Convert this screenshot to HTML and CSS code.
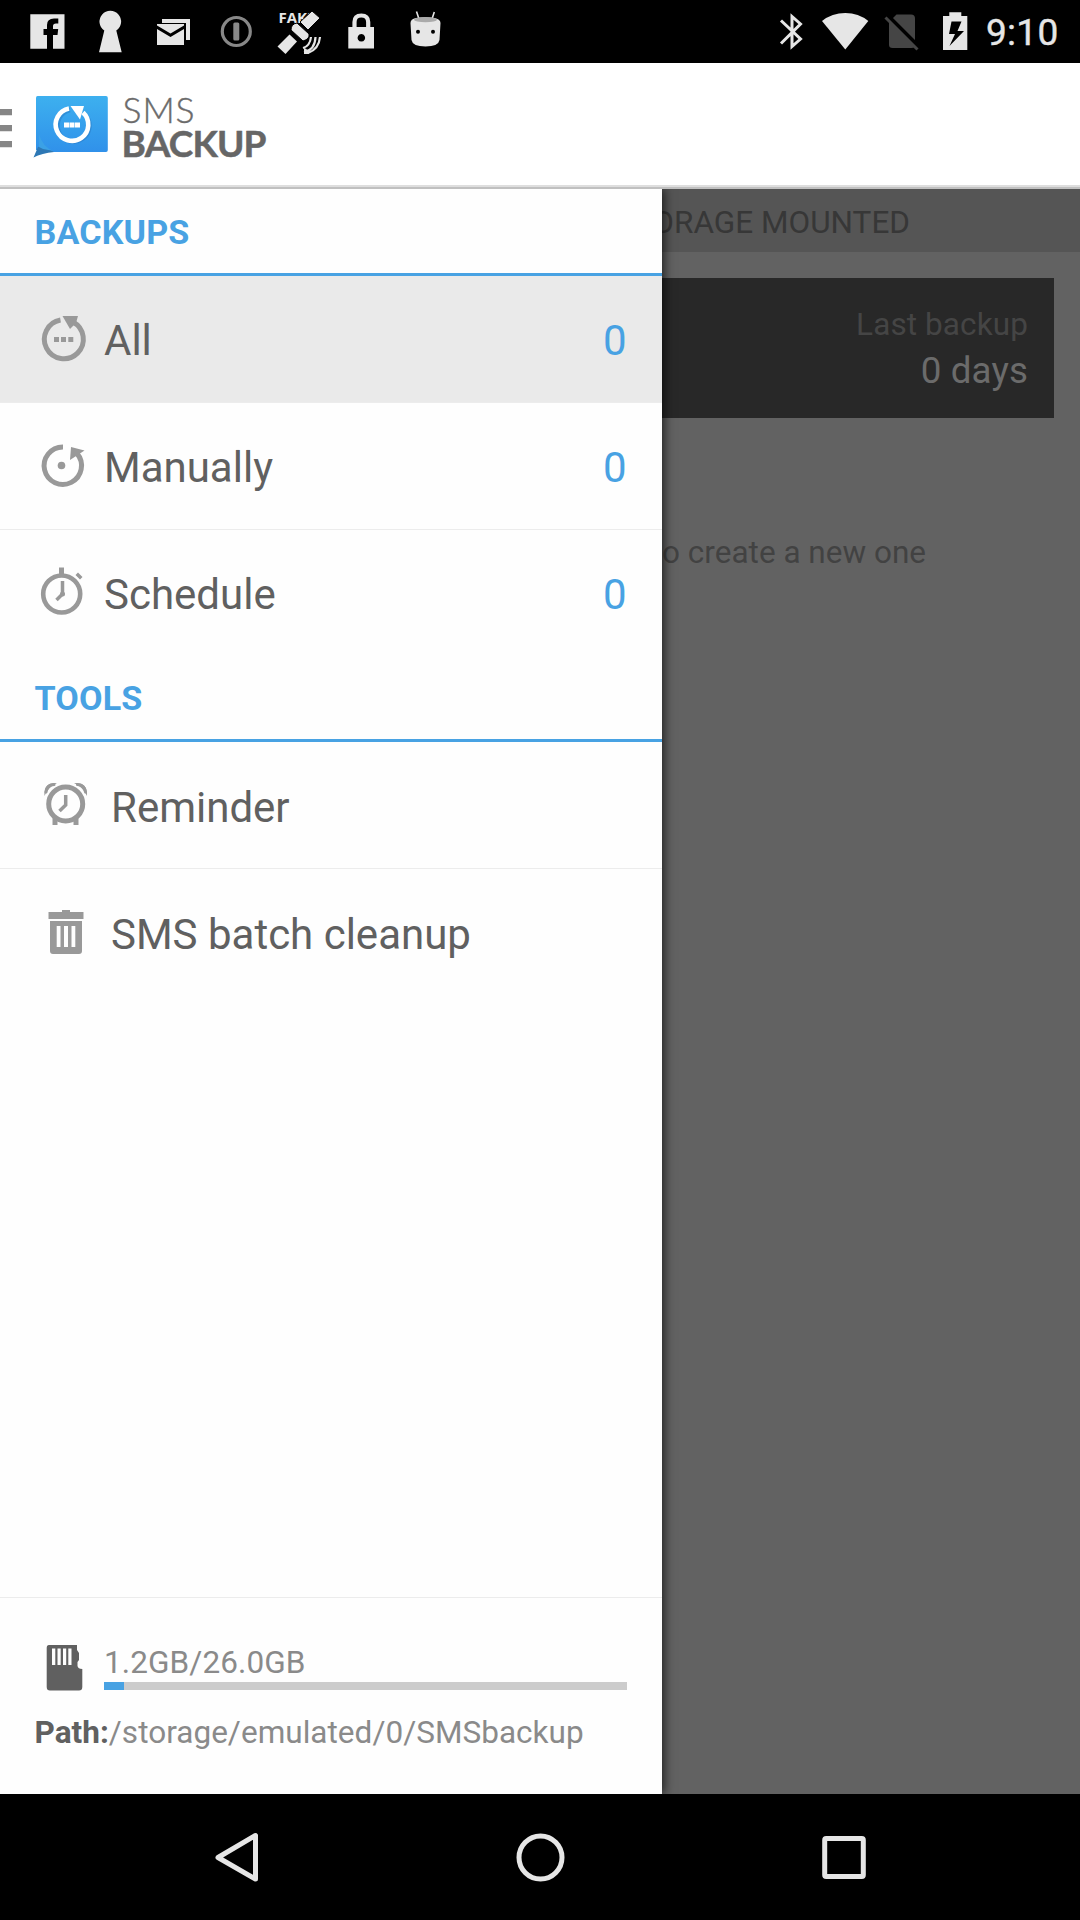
FILE: index.html
```html
<!DOCTYPE html>
<html lang="en">
<head>
<meta charset="utf-8">
<title>SMS Backup</title>
<link rel="stylesheet" href="styles.css">
</head>
<body>
<div class="screen">
  <header class="status">
    <div class="notifications">
      <svg class="cell" viewBox="16 0 63 63"><path fill="#e6e6e6" fill-rule="evenodd" d="M30.300 14.300H64.500V48.700H53V35H57.500L58.200 29H53V26Q53 23.500 56 23.500H58.300V18.500H54Q47 18.500 47 25V29H43.500V35H47V48.700H30.300Z"/></svg>
      <svg class="cell" viewBox="79 0 63 63"><path fill="#e6e6e6" d="M99 52.300L104.300 30.500A10.800 10.800 0 1 1 116.300 30.500L121.700 52.300Z"/></svg>
      <svg class="cell" viewBox="142 0 63 63"><path fill="#e6e6e6" d="M162 19H190V40H186V23H162ZM157 24H184V25.500L170.500 33.500L157 25.500ZM157 29L170.500 37L184 29V45H157Z"/></svg>
      <svg class="cell" viewBox="205 0 63 63"><circle cx="236.300" cy="31.500" r="14" fill="none" stroke="#888" stroke-width="3.200"/><rect x="233.300" y="22.500" width="6" height="18" rx="1.500" fill="#888"/></svg>
      <svg class="cell" viewBox="268 0 63 63"><text x="278.500" y="23" class="fake">FAKE</text><g fill="#e6e6e6"><path stroke="#000" stroke-width="1" d="M312 11L320 18L308 30L300 22Z"/><path stroke="#000" stroke-width="1" d="M297 23L309 34Q310 39 303 41L291 30Q291 24 297 23Z"/><path d="M289.500 34.500L297 41.500L285.500 54L277.500 46.500Z"/><path d="M304 48A7 7 0 0 1 309 54H304Z"/></g><path fill="none" stroke="#e6e6e6" stroke-width="2.200" d="M303 48Q310 46 311 37M304 52Q315 50 315.500 37M308 53Q319 49 320 37"/></svg>
      <svg class="cell" viewBox="331 0 63 63"><path fill="none" stroke="#e6e6e6" stroke-width="4.200" d="M354.500 29V22Q354.500 15.500 361.300 15.500T368.200 22V29"/><path fill="#e6e6e6" fill-rule="evenodd" d="M348.300 27H374V48.500H348.300ZM361.300 34A3.800 3.800 0 1 0 361.400 34Z"/></svg>
      <svg class="cell" viewBox="394 0 63 63"><path d="M416.500 11.500L419 19M434.300 12L432 19" stroke="#e6e6e6" stroke-width="1.600"/><path fill="#e6e6e6" d="M410.500 23Q410.500 19 416 18Q425 16.500 434 18Q440.500 19 440.500 23L439.500 40Q438.500 46.500 425.500 46.500T411.500 40Z"/><ellipse cx="425.500" cy="19.700" rx="11.500" ry="2.600" fill="#aaa"/><circle cx="418" cy="31.700" r="2"/><circle cx="433" cy="31.700" r="2"/></svg>
    </div>
    <div class="system">
      <svg class="bluetooth" viewBox="776 0 32 63"><path fill="none" stroke="#e6e6e6" stroke-width="3" d="M781 20.500L800.500 39L792 46.500V16.500L800.500 24L781 43.500"/></svg>
      <svg class="wifi" viewBox="820 0 50 63"><path fill="#e6e6e6" d="M845.300 49.500L822 21Q832 13 845.300 13T868.300 21Z"/></svg>
      <svg class="sim" viewBox="882 0 40 63"><path fill="#454545" d="M896.500 14.500H911Q915 14.500 915 18.500V45Q915 48 911.500 48H892.500Q889 48 889 45V22Z"/><path stroke="#000" stroke-width="4" d="M888 16L919 47"/><path stroke="#454545" stroke-width="3" d="M885.500 17.500L917.500 49.500"/></svg>
      <svg class="battery" viewBox="940 0 30 63"><path fill="#e6e6e6" fill-rule="evenodd" d="M949.300 12.300H961.300V16H967.300V50H943V16H949.300ZM951.500 21.500L949 34H955L949.500 46L964 31H957.500L961.500 21.500Z"/></svg>
      <span class="clock">9:10</span>
    </div>
  </header>

  <div class="appbar">
    <svg class="brand" viewBox="0 63 300 122">
      <defs>
        <linearGradient id="bubble" x1="0" y1="0" x2="0" y2="1"><stop offset="0" stop-color="#3db0ef"/><stop offset="1" stop-color="#3091ea"/></linearGradient>
      </defs>
      <path fill="#868686" d="M0 109H12V115.200H0ZM0 125H12V131.200H0ZM0 141H12V147.200H0Z"/>
      <path fill="url(#bubble)" d="M37.500 96H106Q107.800 96 107.800 98V150Q107.800 152 106 152H53L36 150V98Q36 96 37.500 96Z"/>
      <path fill="#2d78b5" d="M33.500 157.500L38 147L43 146L54 152Q42 153 33.500 157.500Z"/>
      <path fill="#3ba1e6" d="M39 134Q43 148 54 151L43 149L39 147Z"/>
      <g fill="none" stroke="#2670b8" stroke-opacity=".4" stroke-width="4.500"><path d="M70 110A16 16 0 1 0 84.500 114"/></g>
      <path fill="none" stroke="#fff" stroke-width="4.600" d="M69 108.500A16.300 16.300 0 1 0 83 112.500"/>
      <path fill="#fff" d="M70.500 106H84L80 119.500Z"/>
      <path fill="#fff" d="M64 122.500H69V127.500H64ZM69.500 122.500H74.500V127.500H69.500ZM75 122.500H80V127.500H75Z"/>
      <text class="brand-light" x="122.500" y="123" textLength="72">SMS</text>
      <text class="brand-bold" x="121.500" y="157" textLength="145">BACKUP</text>
    </svg>
  </div>

  <div class="body">
    <main class="content">
      <div class="mounted">STORAGE MOUNTED</div>
      <section class="card"><span class="card-label">Last backup</span><span class="card-value">0 days</span></section>
      <p class="hint">to create a new one</p>
    </main>

    <nav class="drawer">
      <h2 class="heading">BACKUPS</h2>
      <a class="row selected">
        <svg class="icon" viewBox="36 306 54 64"><path fill="none" stroke="#999" stroke-width="5" d="M60.500 320A19.500 19.500 0 1 0 73 322"/><path fill="#999" d="M62.500 316H78L76 323L70 329Z"/><path fill="#999" d="M54 337H59V342H54ZM61 337H66V342H61ZM68.300 337H73.300V342H68.300Z"/></svg>
        <span class="label">All</span><span class="count">0</span>
      </a>
      <a class="row">
        <svg class="icon" viewBox="36 433 54 64"><path fill="none" stroke="#999" stroke-width="5" d="M63 447A18.700 18.700 0 1 0 77 453.500"/><path fill="#999" d="M71 447L84.500 450.500L70 460Z"/><circle cx="61.500" cy="465.500" r="3.800" fill="#999"/></svg>
        <span class="label">Manually</span><span class="count">0</span>
      </a>
      <a class="row last">
        <svg class="icon" viewBox="36 560 54 64"><circle cx="61.700" cy="594" r="18.500" fill="none" stroke="#999" stroke-width="4.600"/><path fill="#999" d="M59 567.500H64V575H59ZM78 572.500L82.500 577L80 579.500L75.500 575Z"/><path fill="none" stroke="#999" stroke-width="3.500" d="M62.500 581V594L56.500 600"/><circle cx="62.500" cy="594" r="2.500" fill="#999"/></svg>
        <span class="label">Schedule</span><span class="count">0</span>
      </a>
      <h2 class="heading tools">TOOLS</h2>
      <a class="row tool">
        <svg class="icon" viewBox="36 773 54 64"><circle cx="65.700" cy="805" r="17" fill="none" stroke="#999" stroke-width="5"/><path fill="#999" d="M44.500 797Q43 783 57 784Q48 788 44.500 797ZM87 797Q88 783 74 784Q83 788 87 797Z"/><path fill="none" stroke="#999" stroke-width="3" stroke-linecap="round" d="M46 793Q47 786 54 785.500M85.500 793Q84.500 786 77.500 785.500"/><path fill="none" stroke="#999" stroke-width="5" d="M55 818V826M76 818V826"/><path fill="none" stroke="#999" stroke-width="3.500" d="M65.700 796V806L59.500 812"/></svg>
        <span class="label">Reminder</span>
      </a>
      <a class="row tool last">
        <svg class="icon" viewBox="36 900 54 64"><path fill="#999" fill-rule="evenodd" d="M48.500 913H62V911H70V913H83.500V920H48.500ZM50 922H82V952Q82 955 79 955H53Q50 955 50 952ZM56.700 927V948H60.500V927ZM64 927V948H68V927ZM71.500 927V948H75.300V927Z"/></svg>
        <span class="label">SMS batch cleanup</span>
      </a>
      <footer class="storage">
        <div class="usage">
          <svg class="icon" viewBox="36 1638 54 60"><path fill="#606060" fill-rule="evenodd" d="M49 1645H77V1650L79 1653V1660L77.500 1662V1666Q78 1669 82.300 1669V1687Q82.300 1690.500 79 1690.500H50Q46.700 1690.500 46.700 1687V1648Q46.700 1645 49 1645ZM52 1648.500V1665H55.300V1648.500ZM57.500 1648.500V1665H60.700V1648.500ZM63 1648.500V1665H66.200V1648.500ZM68.300 1648.500V1665H71.500V1648.500Z"/></svg>
          <div class="meter"><span class="amount">1.2GB/26.0GB</span><div class="track"><div class="fill"></div></div></div>
        </div>
        <p class="path"><b>Path:</b>/storage/emulated/0/SMSbackup</p>
      </footer>
    </nav>
  </div>

  <footer class="navbar">
    <svg class="navicon" viewBox="210 1831 54 54"><path fill="none" stroke="#e6e6e6" stroke-width="5" stroke-linejoin="round" d="M255.500 1835.500V1879L218 1857.500Z"/></svg>
    <svg class="navicon" viewBox="513.500 1831 54 54"><circle cx="540" cy="1857.500" r="21.500" fill="none" stroke="#e6e6e6" stroke-width="5"/></svg>
    <svg class="navicon" viewBox="817 1831 54 54"><rect x="824.700" y="1838.500" width="38.600" height="38" rx="1.500" fill="none" stroke="#e6e6e6" stroke-width="5"/></svg>
  </footer>
</div>
</body>
</html>
```
FILE: styles.css
```css
* { box-sizing: border-box; }
body { margin: 0; font-family: Roboto, "Liberation Sans", sans-serif; }
h2, p { margin: 0; }
svg { display: block; flex: none; }

.screen { display: flex; flex-direction: column; width: 1080px; height: 1920px; overflow: hidden; background: #000; }

.status { display: flex; justify-content: space-between; height: 63px; padding: 0 21px 0 16px; background: #000; }
.notifications, .system { display: flex; }
.cell { width: 63px; height: 63px; }
.fake { font: bold 15px "Open Sans", sans-serif; fill: #e6e6e6; }
.bluetooth { width: 32px; height: 63px; margin-right: 12px; }
.wifi { width: 50px; height: 63px; margin-right: 12px; }
.sim { width: 40px; height: 63px; margin-right: 18px; }
.battery { width: 30px; height: 63px; margin-right: 16px; }
.clock { width: 73px; font-size: 37px; font-weight: 400; letter-spacing: .3px; line-height: 66px; color: #e6e6e6; -webkit-text-stroke: .4px #e6e6e6; white-space: nowrap; }

.appbar { height: 126px; background: linear-gradient(#fff 122px, #dedede 122px, #dedede 124px, #c0c0c0 124px); }
.brand { width: 300px; height: 122px; }
.brand-light { font: 300 35.500px Lato, sans-serif; fill: #6b6b6b; stroke: #6b6b6b; stroke-width: .4px; }
.brand-bold { font: 700 37px Lato, sans-serif; fill: #666; stroke: #666; stroke-width: .5px; }

.body { display: grid; grid-template: 1605px / 661.5px 418.5px; }
.content { grid-area: 1 / 1 / 2 / 3; display: flex; flex-direction: column; background: #626262; }
.mounted { height: 63px; padding-right: 170px; background: #555; color: #373737; font-size: 31.5px; line-height: 67px; text-align: right; }
.card { display: flex; flex-direction: column; align-items: flex-end; height: 140px; margin: 26px 26px 0; padding: 27px 26px 0; background: #282828; }
.card-label { font-size: 31.5px; line-height: 39px; color: #454545; letter-spacing: .1px; }
.card-value { margin-top: 5px; font-size: 36.75px; line-height: 44px; color: #6b6b6b; letter-spacing: .1px; }
.hint { margin-top: 116px; padding-right: 154px; font-size: 31.5px; line-height: 38px; text-align: right; color: #424242; }

.drawer { grid-area: 1 / 1; z-index: 1; display: flex; flex-direction: column; background: #fefefe; color: #606060; box-shadow: 2px 0 10px rgba(0, 0, 0, .7); clip-path: inset(0 -20px 0 0); }
.heading { flex: none; height: 87px; padding-left: 34.5px; border-bottom: 3px solid #48a2e3; font-size: 34.125px; letter-spacing: .15px; line-height: 86px; color: #48a2e3; }
.heading.tools { height: 86px; line-height: 85px; }
.row { display: flex; align-items: center; height: 127px; padding: 0 35px 0 36px; border-bottom: 1px solid #ececec; font-size: 42px; line-height: 50px; }
.row.last { height: 126px; border-bottom: 0; }
.selected { background: #eaeaea; }
.icon { width: 54px; height: 64px; margin-bottom: 3px; }
.label { flex: 1; margin-left: 14px; padding-top: 4px; }
.tool .label { margin-left: 21px; padding-top: 5px; }
.count { padding-top: 4px; color: #48a2e3; }
.storage { height: 197px; margin-top: auto; padding: 40px 35px 0 34.5px; border-top: 1px solid #ececec; }
.usage { display: flex; height: 60px; padding-left: 1.5px; }
.usage .icon { height: 60px; margin: 0; }
.meter { flex: 1; margin-left: 14px; padding-top: 5px; }
.amount { display: block; height: 39px; font-size: 31.5px; line-height: 39px; letter-spacing: .1px; color: #8a8a8a; }
.track { height: 8px; background: #ccc; }
.fill { width: 20px; height: 8px; background: #48a2e3; }
.path { margin-top: 15px; font-size: 31.5px; line-height: 39px; letter-spacing: .03px; color: #8a8a8a; white-space: nowrap; }
.path b { color: #606060; }

.navbar { display: flex; justify-content: space-between; align-items: flex-start; height: 126px; padding: 37px 209px 0 210px; background: #000; }
.navicon { width: 54px; height: 54px; }
```
